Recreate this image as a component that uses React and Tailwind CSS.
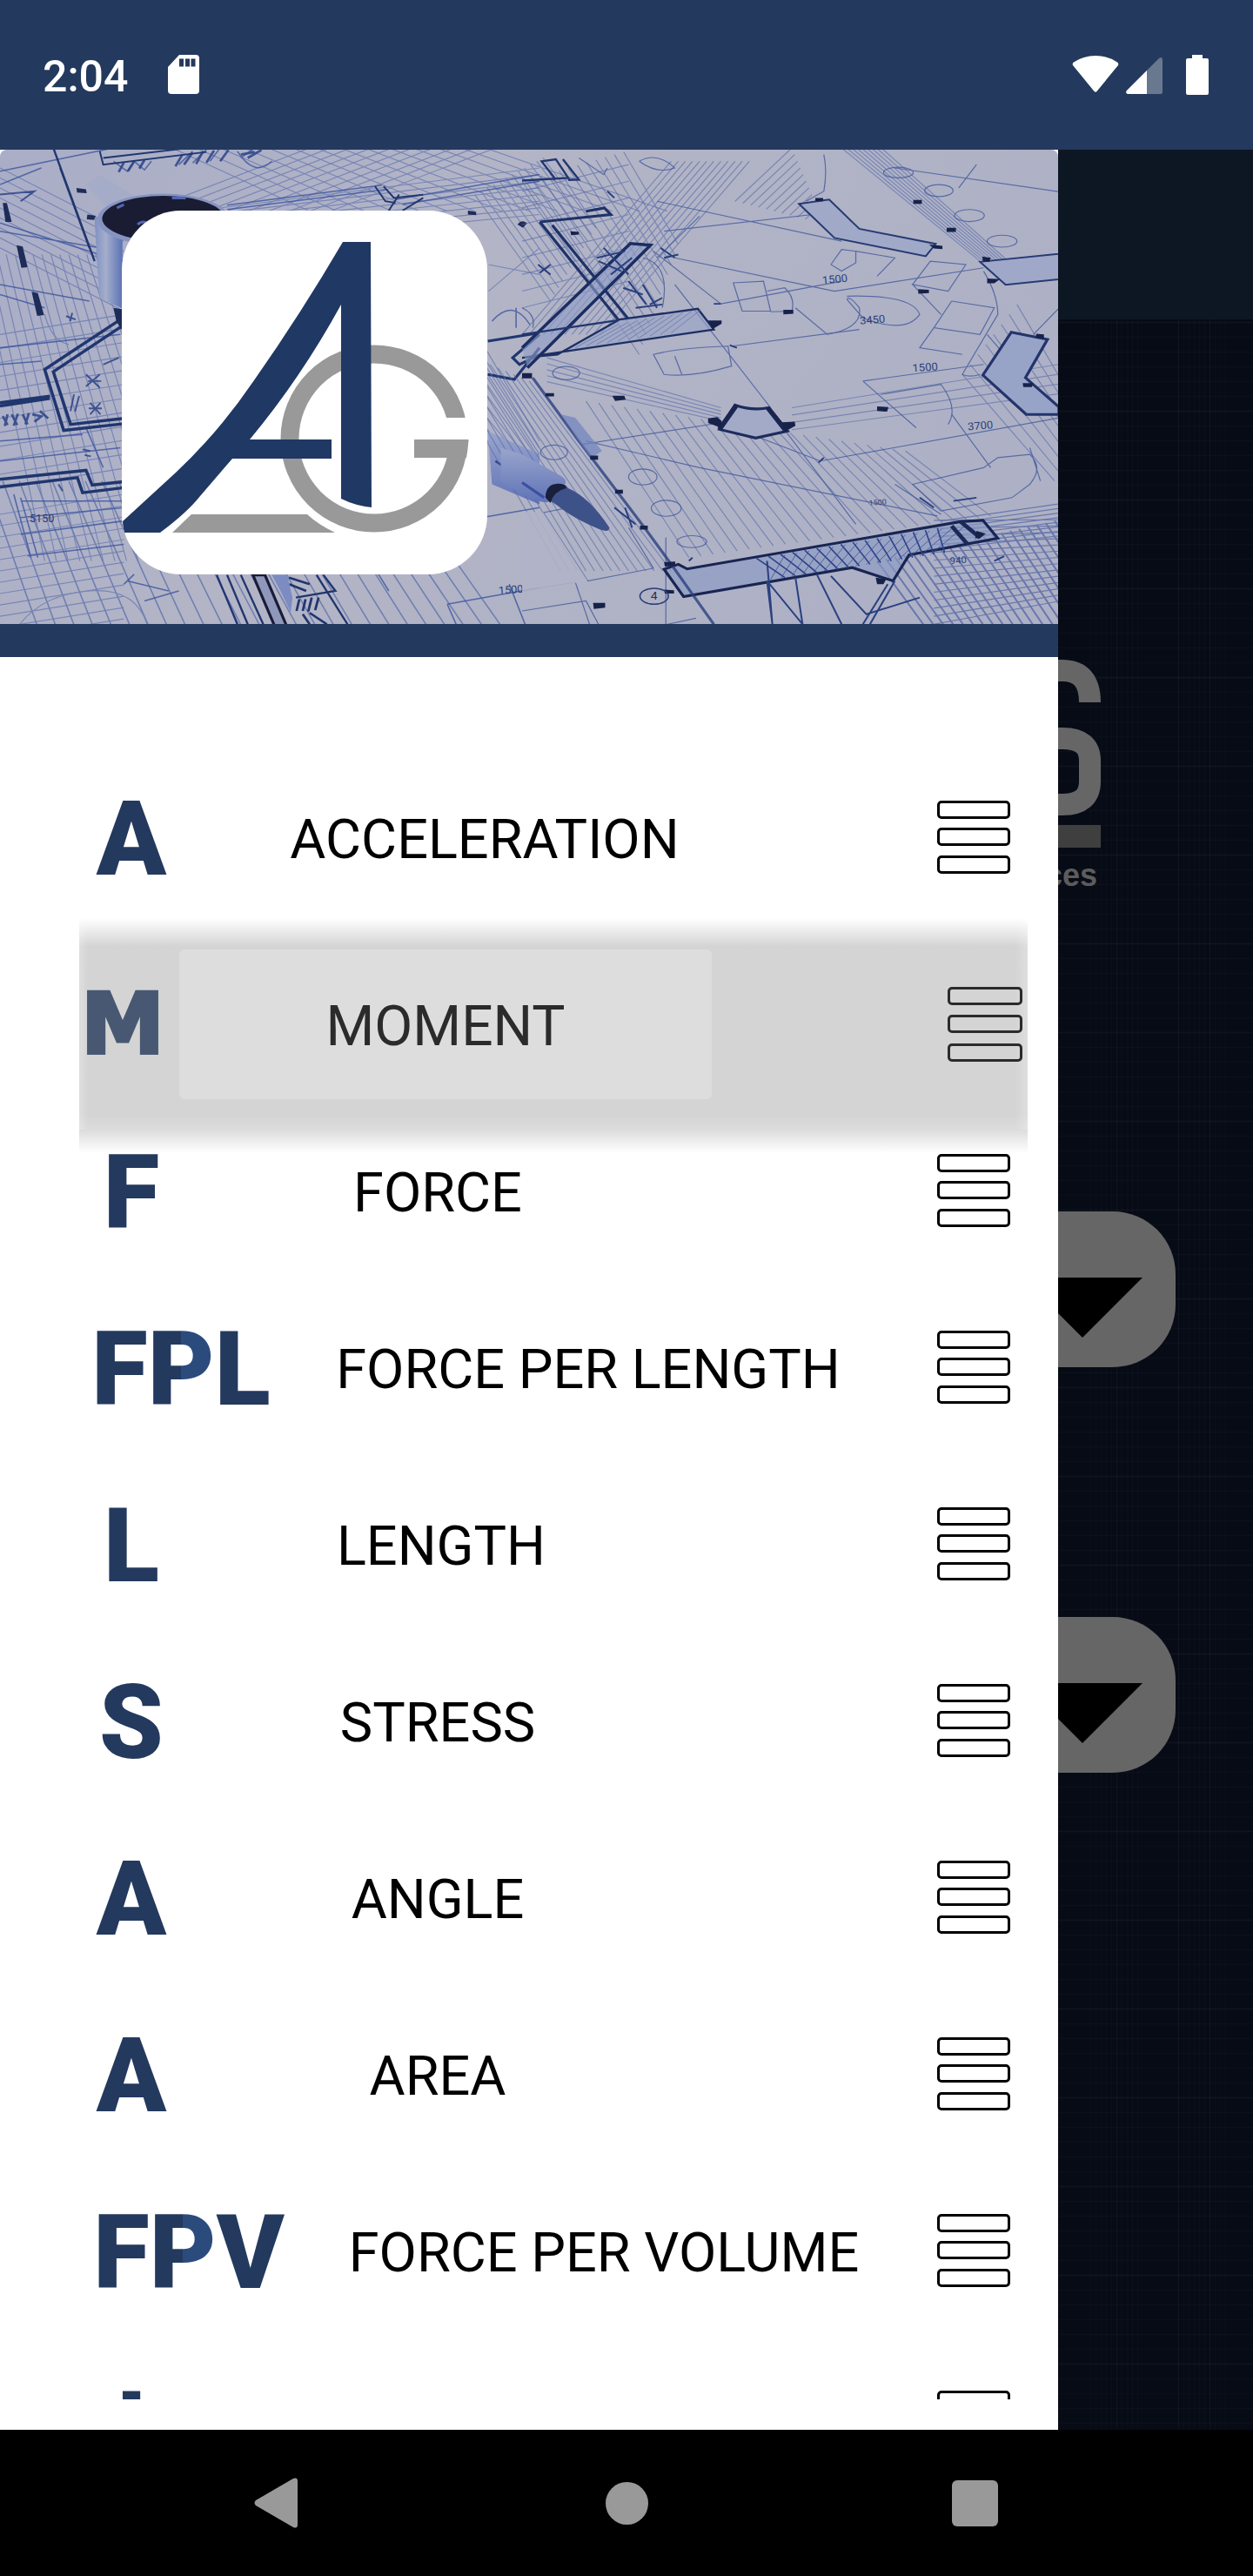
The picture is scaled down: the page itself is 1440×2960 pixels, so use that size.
import React from "react";

const NAVY = "#24395e";

const ITEMS = [
  { code: "A", label: "ACCELERATION", slot: "w-[120px]", button: "w-[692px]" },
  { code: "M", label: "MOMENT", slot: "w-[120px]", button: "w-[612px]", dragging: true },
  { code: "F", label: "FORCE", slot: "w-[120px]", button: "w-[584px]" },
  { code: "FPL", label: "FORCE PER LENGTH", slot: "w-[234px]", button: "w-[702px]" },
  { code: "L", label: "LENGTH", slot: "w-[120px]", button: "w-[592px]" },
  { code: "S", label: "STRESS", slot: "w-[120px]", button: "w-[584px]" },
  { code: "A", label: "ANGLE", slot: "w-[120px]", button: "w-[584px]" },
  { code: "A", label: "AREA", slot: "w-[120px]", button: "w-[584px]" },
  { code: "FPV", label: "FORCE PER VOLUME", slot: "w-[252px]", button: "w-[702px]" },
  { code: "I", label: "", slot: "w-[120px]", button: "w-[584px]" },
];

/* Path data for n segments, each shifted from the previous one. */
function family(n, x1, y1, x2, y2, dx1, dy1, dx2 = dx1, dy2 = dy1) {
  let d = "";
  for (let i = 0; i < n; i++) {
    d += `M${x1 + dx1 * i} ${y1 + dy1 * i}L${x2 + dx2 * i} ${y2 + dy2 * i}`;
  }
  return d;
}

function StatusBar() {
  return (
    <header className="flex h-[172px] items-center justify-between bg-[#24395e] pl-[49px] pr-[51px] text-white">
      <div className="flex items-center gap-[46px]">
        <span className="pt-1 text-[50px] leading-none font-medium">2:04</span>
        <svg className="h-[46px] w-[36px]" viewBox="0 0 36 46" aria-hidden="true">
          <path d="M13 0H32a4 4 0 0 1 4 4V41a4 4 0 0 1-4 4H4a4 4 0 0 1-4-4V14z" fill="#fff" />
          <path d="M13 4.500h5v9h-5zM20 4.500h5v9h-5zM26.500 4.500h5v9h-5z" fill={NAVY} />
        </svg>
      </div>
      <div className="flex items-center">
        <svg className="h-[46px] w-[54px]" viewBox="0 0 54 46" aria-hidden="true">
          <path d="M1 12Q0 10 2 8.500Q13 1 27 1T52 8.500Q54 10 53 12L28.500 42Q27 43.500 25.500 42z" fill="#fff" />
        </svg>
        <svg className="ml-2 h-[46px] w-[42px]" viewBox="0 0 42 46" aria-hidden="true">
          <path d="M1 41L38 4Q42 1.500 42 6V43q0 2-2 2H2q-3-1-1-4z" fill="#68788f" />
          <path d="M1 41L24 18V45H2q-3-1-1-4z" fill="#fff" />
        </svg>
        <svg className="ml-[27px] h-[46px] w-[26px]" viewBox="0 0 26 46" aria-hidden="true">
          <path d="M7 0H19V4H24q2 0 2 2V44q0 2-2 2H2q-2 0-2-2V6q0-2 2-2H7z" fill="#fff" />
        </svg>
      </div>
    </header>
  );
}

function Blueprint() {
  return (
    <svg
      className="absolute inset-0 h-full w-full"
      viewBox="0 0 1216 545"
      preserveAspectRatio="xMidYMid slice"
      fill="none"
      aria-hidden="true"
    >
      <defs>
        <linearGradient id="paper" x1="0" y1="0" x2="1" y2="0.3">
          <stop offset="0" stopColor="#a9adc6" />
          <stop offset="0.45" stopColor="#b3b5c6" />
          <stop offset="1" stopColor="#aeb1c5" />
        </linearGradient>
        <linearGradient id="mug" x1="0" y1="0" x2="1" y2="0">
          <stop offset="0" stopColor="#7f90c4" />
          <stop offset="0.4" stopColor="#a4aecb" />
          <stop offset="1" stopColor="#5b72b4" />
        </linearGradient>
        <linearGradient id="pen" x1="0" y1="0" x2="0" y2="1">
          <stop offset="0" stopColor="#9aa5cc" />
          <stop offset="1" stopColor="#5f74b8" />
        </linearGradient>
      </defs>
      <rect width="1216" height="545" fill="url(#paper)" />

      {/* left half of the sheet */}
      <g transform="translate(0 -2) scale(.3954 .3827)">
        <g stroke="#4b62a8" strokeWidth="3" opacity="0.55">
          <path d={family(16, -60, 320, 130, 1240, 26, 0, 34, 0)} />
          <path d={family(12, 0, 560, 360, 500, 0, 42)} />
          <path d={family(9, 0, 60, 360, 250, 0, 30)} />
          <path d={family(12, 0, 1100, 360, 1040, 0, 34)} />
          <path d={family(26, -40, 1000, 110, 1440, 48, 0, 54, 0)} stroke="#3a539f" strokeWidth="4" />
          <path d={family(8, 640, 180, 1568, 60, 0, 16, 0, 20)} />
          <path d={family(14, 500, 0, 900, 190, 70, 0, 80, 0)} />
          <path d={family(10, 900, 0, 420, 190, 60, 0)} />
          <path d={family(12, 1380, 140, 1600, 460, 18, -10, 12, -20)} />
          <path d={family(9, 1410, 600, 1568, 880, 0, 34, 0, 20)} />
          <path d="M50 1440Q120 1340 260 1330T430 1440M130 500Q150 580 200 590M1420 430L1568 300M1420 350L1568 380" />
        </g>
        <g stroke="#3c549f" strokeWidth="4" opacity="0.8">
          <path d="M0 70L330 0M0 110L120 60M0 225L290 320M0 250L290 300M0 410L260 460M0 440L130 480M40 1040L90 1230M60 1050L110 1230M60 1060H360M60 1110L360 1080M60 1160L360 1120M80 1225L360 1190" />
          <path d="M0 600L350 560M0 650L120 640M0 880L240 860M0 940L350 900M250 840L300 960M420 1360L520 1330M370 1300L490 1330M390 1280L360 1310M1400 1110L1568 1080M1300 1370L1568 1320M1300 1370L1330 1440M1480 1310L1530 1440M1100 1280L1130 1330" />
          <path d="M660 185L1120 125M660 172L1110 112M1150 155L1568 80M1170 170L1568 100M690 10Q740 90 790 40M740 0L700 30M560 10L520 50M600 5L560 45M640 0L610 40M330 40L370 70L390 40L420 66L440 40" />
          <path d="M1430 520Q1490 450 1540 530M1500 480V540" />
        </g>
        <g stroke="#2c4388" strokeWidth="7" opacity="0.85">
          <path d="M8 805L22 832M22 800L14 835M34 800L50 832M52 798L40 834M66 800L80 830M84 796L74 830M94 800L120 806L100 822M116 790L140 812M510 55L530 20M535 50L560 14M570 48L590 10M600 44L622 8M640 40L664 6M345 72L360 44M372 70L390 40M405 62L420 36M700 20L740 12M720 30L760 6" />
          <path d="M250 680L290 720M290 680L250 716M256 700H294M262 765L292 800M292 765L262 800M258 782H296M300 650L345 630M215 740L205 790M230 745L218 792M192 505L220 515M210 495L204 520M170 1010L182 1030M0 140L100 130L60 160M240 905L262 910M246 922L264 926" strokeWidth="5" />
        </g>
        <g stroke="#20366f" strokeWidth="9">
          <path d="M155 0L275 340M175 60L260 300" strokeWidth="6" />
          <path d="M350 515L130 665L185 848L360 828M350 538L155 672L205 830L360 812" />
          <path d="M0 1018L225 990L240 1035L360 1020M0 995L250 968L268 1012L360 1002M0 775L145 752M0 765L145 745" />
          <path d="M630 1282L690 1430M660 1282L720 1430M700 1282L765 1430M920 1282L1010 1430M940 1282L975 1330L860 1350" strokeWidth="6" />
          <path d="M1090 115L1120 160L1150 165M1115 115L1145 150L1230 140M1130 188L1160 140M1170 188L1230 150M290 10L300 50L600 12M300 30L550 0" strokeWidth="5" />
          <path d="M1418 580L1568 555M1418 680L1495 695L1568 600M1568 560L1490 630L1510 650L1568 620" strokeWidth="8" />
          <path d="M870 1355L862 1390M888 1355L880 1390M906 1350L896 1392M926 1350L916 1388M880 1400L900 1430M900 1396L950 1430M840 1290L900 1310M840 1310L890 1330" strokeWidth="7" />
        </g>
        <path d="M735 1282H770L835 1440H800z" fill="#8f98bb" stroke="#191c38" strokeWidth="8" />
        <path d="M790 1282L815 1330L845 1395L850 1350L835 1282z" fill="#7c8cc2" />
        <g fill="#1d2c58">
          <path d="M48 292L66 296L80 358L62 360zM92 432L110 436L128 502L108 504zM8 165L20 165L34 222L16 222zM222 120L250 124L252 136L224 134zM254 200L278 204L274 216L252 214zM1360 188L1384 192L1384 202L1360 200zM1504 230Q1516 212 1532 226L1520 240zM330 480L354 484V546L338 520z" />
        </g>
        <path d="M250 110L290 80L400 150L330 200z" fill="#a5acc8" />
        <path d="M275 210Q282 360 290 450L356 482V250L300 200z" fill="url(#mug)" />
        <ellipse cx="475" cy="215" rx="192" ry="78" fill="#8794c2" />
        <ellipse cx="475" cy="212" rx="178" ry="68" fill="#1a1c33" />
        <path d="M400 230Q420 210 440 240M340 180L360 170M500 150H540" stroke="#5267b4" strokeWidth="8" />
        <path d="M1418 850L1568 920V1070L1430 1010z" fill="url(#pen)" />
        <path d="M1440 940L1568 1030" stroke="#2f4588" strokeWidth="6" />
        <g fill="#2a3d74" fontFamily="Roboto, sans-serif" fontSize="32">
          <text x="1450" y="1340" transform="rotate(-4 1450 1340)">1500</text>
          <text x="86" y="1124">5150</text>
        </g>
      </g>

      {/* right half of the sheet */}
      <g transform="translate(600 -2) scale(.408 .3827)">
        <g stroke="#5569a8" strokeWidth="3" opacity="0.6">
          <path d={family(14, 20, 700, 420, 1270, -22, -10, -24, 0)} />
          <path d={family(26, 180, 760, 470, 1230, 36, 6, 34, -5)} />
          <path d={family(24, 1000, 1240, 1130, 1430, 25, -6, 28, 0)} stroke="#3a529c" strokeWidth="5" />
          <path d={family(14, 1160, 1430, 1568, 1350, 0, -24, 0, -18)} stroke="#3a529c" />
          <path d={family(12, 0, 100, 330, 620, 26, -8, 10, -30)} />
          <path d={family(12, 0, 560, 420, 40, 20, 0)} />
          <path d={family(10, 600, 160, 760, 0, 22, 6, 8, 20)} />
          <path d={family(9, 900, 0, 1290, 340, 14, 0, 12, 2)} />
          <path d={family(8, 1240, 680, 1500, 1000, 22, -30, 10, -30)} />
          <path d={family(8, 0, 480, 300, 400, 0, -50)} />
          <path d={family(5, 70, 630, 560, 780, 0, 18, 0, 10)} />
          <path d={family(4, 760, 780, 1568, 640, 0, 22, 0, 30)} />
          <path d={family(8, 1180, 1120, 1568, 1060, 0, 12, 0, 14)} stroke="#3a529c" />
        </g>
        <g stroke="#43599c" strokeWidth="3" opacity="0.8">
          <path d="M380 160L900 280M430 330L880 430L1300 360M400 250L900 190M500 205L380 330M1050 60L1568 140M1230 120L1280 50M370 310L560 468M430 410L700 780M590 595L950 545M560 468L900 400M170 890L560 825L840 940L1568 800M180 880L500 960L1170 1105M960 700L1300 650M960 700L1110 840M1010 740L1180 710Q1230 780 1200 830M700 790L940 1130" />
          <path d="M595 405L680 400L700 490L620 490zM690 430L740 420Q770 450 760 490L700 492M770 480L860 560Q960 540 950 480Q920 440 915 455M915 445Q1100 440 1120 500Q1080 560 960 510L915 455M870 350L900 305L940 310L940 345L900 370zM940 310L1050 330L1000 385M1100 410L1150 340L1250 350L1200 430L1100 410L1180 500M1210 460L1330 480L1290 560L1160 540L1210 460M1160 540L1120 600L1240 620" />
          <path d="M370 620Q440 600 580 595L590 655Q480 690 400 680zM430 625L450 680M0 480Q40 500 30 540M340 330Q420 350 395 480M850 20Q860 70 850 130L800 160M330 40Q380 10 430 60Q380 80 330 40M160 30L230 80L240 60" />
          <ellipse cx="90" cy="914" rx="38" ry="22" />
          <ellipse cx="340" cy="988" rx="40" ry="24" />
          <ellipse cx="406" cy="1082" rx="42" ry="24" />
          <ellipse cx="478" cy="1182" rx="42" ry="18" />
          <ellipse cx="1352" cy="280" rx="42" ry="18" />
          <ellipse cx="1260" cy="203" rx="42" ry="18" />
          <ellipse cx="1174" cy="128" rx="40" ry="18" />
          <ellipse cx="1060" cy="74" rx="42" ry="16" />
          <ellipse cx="124" cy="676" rx="38" ry="20" />
          <path d="M1100 1010L1300 960L1340 930L1430 920Q1470 960 1430 1010L1380 1050L1180 1090zM1210 800L1320 960M1430 900L1460 1000M1050 1010L1180 1100M1290 680Q1260 690 1240 680L1340 500Q1340 440 1300 370" />
          <path d="M0 1330L150 1304L190 1430M0 1390L180 1360L215 1430M60 1095L185 1300L370 1262L300 1140M60 1095L130 1080M405 1170V1430M410 1430L490 1412M1568 880L1310 560M1440 560L1568 420" />
        </g>
        <path d="M0 1090L60 1095L185 1300L0 1335z" fill="#b1b4c8" fillOpacity="0.85" />
        <path d="M780 168L865 155L950 243L1165 288L1137 325L880 270z" fill="#a1a9c8" stroke="#263a74" strokeWidth="5" />
        <path d="M1290 342L1568 312V388L1362 411z" fill="#9fa8c8" stroke="#263a74" strokeWidth="5" />
        <path d="M1378 553L1480 575L1418 690L1512 778V800H1420L1298 682z" fill="#98a3c8" stroke="#22346b" strokeWidth="8" />
        <path d="M100 620L275 515L495 483L540 545L0 630z" fill="#98a2c6" fillOpacity="0.6" stroke="#1d2f63" strokeWidth="6" />
        <path d={family(10, 150, 600, 270, 530, 30, -5, 26, -5)} stroke="#6678ad" strokeWidth="2" />
        <path d="M50 222L272 517M85 232L298 512M50 222L250 200L232 180L180 190" stroke="#1f3267" strokeWidth="8" />
        <path d="M0 600L305 287L362 292L15 660" fill="#8f9cc6" fillOpacity="0.6" stroke="#1c2d62" strokeWidth="9" />
        <path d="M0 560L272 517M0 98L130 90L95 34L55 40L95 95M115 34L160 95L130 96" stroke="#22376f" strokeWidth="6" />
        <path d="M600 772Q650 790 694 780L748 850L658 871L556 845z" fill="#a2aac8" stroke="#1d2c5c" strokeWidth="8" />
        <path d="M556 845L604 772M692 780L744 850" stroke="#1a2550" strokeWidth="14" />
        <path d="M400 1265L455 1347L930 1260L1045 1300L1090 1222L1340 1172L1298 1118L1235 1122L465 1264L440 1250z" fill="#8c99c3" fillOpacity="0.65" stroke="#182552" strokeWidth="8" />
        <path d={family(16, 660, 1232, 740, 1290, 34, -6, 30, -5)} stroke="#2b4288" strokeWidth="4" />
        <path d={family(16, 740, 1222, 700, 1296, 34, -6, 30, -5)} stroke="#3b5194" strokeWidth="2" />
        <path d="M690 1300L705 1430M690 1240L705 1430M690 1300L790 1430M790 1430L770 1290M830 1280L900 1430M1030 1310L960 1430M1050 1300L980 1430M870 1285L970 1400L1120 1350" stroke="#2a4080" strokeWidth="5" />
        <path d="M1210 1135L1255 1190M1235 1122L1290 1170" stroke="#1b2957" strokeWidth="12" />
        <path d="M30 690L160 880L345 1140L420 1250L540 1430" stroke="#2a4080" strokeWidth="8" opacity="0.8" />
        <path d="M110 800L160 880L195 930L225 910L150 810z" fill="#6f83bd" fillOpacity="0.7" />
        <g fill="#17224a">
          <path d="M524 812L550 808L562 820L560 840L524 826zM732 824L768 822L770 834L740 852zM254 744L288 744L292 756L262 760zM524 518L562 518L562 528L536 544zM736 486L764 486V498L736 500zM1116 424L1146 426V436L1116 438zM1000 776L1032 778L1028 792L1000 790zM1410 706H1440L1436 718H1412zM1296 326L1320 330L1316 342L1298 340zM1310 392L1346 394L1330 406H1310zM1448 558L1470 560V572L1448 570zM1102 156H1126V168H1102zM1196 240H1222V252H1196zM200 1366L234 1366V1380L202 1384zM400 1244L432 1242L430 1256H402zM400 1326L428 1328V1338H402zM996 1290L1026 1294L1018 1310H1000zM262 1026H284V1038H262zM192 924H214V936H192zM332 1134H354V1146H332zM66 736H90V746H66zM136 250L160 252V260L138 262zM0 676H28V692H0zM1146 290L1184 294V304L1160 302zM826 150H848V160H826zM1280 1150L1306 1158L1290 1172H1276z" />
        </g>
        <g stroke="#2a3f7d" strokeWidth="5">
          <path d="M210 330L290 310M230 300L300 380M250 380L310 330M215 340L280 370M285 420L340 440M300 400L350 470M320 480L395 470M340 410L380 480M360 470L395 450M1120 1050L1160 1080M1215 1060L1280 1050M390 300L430 330M400 330L440 320M240 130L260 150M45 350L80 380M50 375L80 350M260 1080L320 1130M290 1080L310 1140M540 468H560M835 945L850 930M585 592L605 600M470 1240L480 1230M1330 1240L1358 1226" />
        </g>
        <g fill="#2c3f78" fontFamily="Roboto, sans-serif" fontSize="32">
          <text x="846" y="408" transform="rotate(-5 846 408)">1500</text>
          <text x="952" y="530" transform="rotate(-5 952 530)">3450</text>
          <text x="1100" y="672" transform="rotate(-4 1100 672)">1500</text>
          <text x="1256" y="848" transform="rotate(-5 1256 848)">3700</text>
          <text x="978" y="1074" fontSize="22" transform="rotate(-5 978 1074)">1500</text>
          <text x="1206" y="1250" fontSize="28" transform="rotate(-5 1206 1250)">940</text>
        </g>
        <ellipse cx="372" cy="1346" rx="40" ry="24" stroke="#2c3f78" strokeWidth="4" />
        <text x="362" y="1357" fill="#1f2f62" fontFamily="Roboto, sans-serif" fontSize="34">4</text>
        <path d="M-60 900L0 920L110 985Q130 1000 120 1010L75 1062Q60 1070 0 1040L-60 1000z" fill="url(#pen)" />
        <path d="M0 1005L62 1050" stroke="#3a50a0" strokeWidth="8" />
        <path d="M66 1050Q66 1010 122 1012L130 1022Q190 1050 246 1140Q246 1156 220 1146Q140 1110 100 1074z" fill="#3d5289" />
        <path d="M66 1050Q66 1010 100 1008Q125 1008 124 1022Q90 1030 80 1066z" fill="#191f3c" />
      </g>
    </svg>
  );
}

function AppLogo() {
  return (
    <svg className="h-full w-full" viewBox="0 0 420 418" role="img" aria-label="AG logo">
      <circle cx="290" cy="262" r="97" fill="none" stroke="#999" strokeWidth="21" />
      <path d="M366 238H420V274H366z" fill="#fff" />
      <path d="M336 263H398.500Q398 273 396 284H336z" fill="#999" />
      <path d="M80 349H213Q226 361 245 370H58z" fill="#999" />
      <path
        d="M254 36H286L287 341Q268 339 252 331V108Q206 192 147 263H241V285H127L90 328Q75 347 44 370H3Q1 364 1 357L62 301Q112 254 152 195Q206 118 254 36z"
        fill="#203864"
      />
    </svg>
  );
}

function DragHandle({ dragging }) {
  return (
    <button
      type="button"
      aria-label="Reorder"
      className={
        dragging
          ? "ml-auto flex h-[86px] w-[86px] flex-col justify-between"
          : "ml-auto flex h-[84px] w-[84px] flex-col justify-between"
      }
    >
      {[0, 1, 2].map((bar) => (
        <span
          key={bar}
          className={
            dragging
              ? "h-[21px] w-full rounded-[5px] border-3 border-[#2b2b2b]"
              : "h-[21px] w-full rounded-[5px] border-3 border-black"
          }
        />
      ))}
    </button>
  );
}

function Code({ text }) {
  return [...text].map((ch, i) =>
    ch === "P" ? (
      <span
        key={i}
        className="bg-[linear-gradient(90deg,#24395e_50%,#2b4b7d_50%)] bg-clip-text text-transparent"
      >
        P
      </span>
    ) : (
      <span key={i}>{ch}</span>
    )
  );
}

function Item({ item }) {
  if (item.dragging) {
    return (
      <li className="relative z-10 h-[203px] shrink-0">
        <div className="absolute -top-[8px] right-[35px] left-[91px] h-[270px] bg-[linear-gradient(180deg,#d4d4d400_0%,#d4d4d4_12%,#d4d4d4_84%,#dcdcdc_90%,#dcdcdc00_100%)]">
          <div className="flex h-[243px] items-center bg-[linear-gradient(90deg,#ffffff40,#ffffff00_10px,#ffffff00_calc(100%_-_14px),#ffffff40)] pr-[6px]">
            <span className="w-[100px] text-center font-['DejaVu_Sans'] text-[96px] leading-none font-bold text-[#485872] [-webkit-text-stroke:4px_#485872]">
              {item.code}
            </span>
            <button
              type="button"
              className="ml-[15px] h-[172px] w-[612px] rounded-md bg-[#ddd] pt-[6px] text-[64px] leading-none text-[#2b2b2b]"
            >
              {item.label}
            </button>
            <DragHandle dragging />
          </div>
        </div>
      </li>
    );
  }
  return (
    <li className="flex h-[203px] shrink-0 items-center pr-[55px] pl-[91px]">
      <span
        className={`${item.slot} shrink-0 pt-[6px] text-center text-[118px] leading-none font-black whitespace-nowrap text-[#24395e]`}
      >
        <Code text={item.code} />
      </span>
      {item.label && (
        <button
          type="button"
          className={`${item.button} h-[168px] shrink-0 pt-[6px] text-[63px] leading-none whitespace-nowrap text-black`}
        >
          {item.label}
        </button>
      )}
      <DragHandle />
    </li>
  );
}

function Drawer() {
  return (
    <nav
      aria-label="Quantities"
      className="z-10 col-start-1 row-start-1 flex h-[2620px] w-[calc(100%-224px)] flex-col bg-white"
    >
      <div className="relative h-[545px] shrink-0 overflow-hidden rounded-t-lg">
        <Blueprint />
        <div className="relative mt-[70px] ml-[140px] h-[418px] w-[420px] overflow-hidden rounded-[68px] bg-white">
          <AppLogo />
        </div>
      </div>
      <div className="h-[38px] shrink-0 bg-[#24395e]" />
      <ul className="mb-[35px] flex min-h-0 flex-1 flex-col overflow-hidden pt-[105px]">
        {ITEMS.map((item, i) => (
          <Item key={i} item={item} />
        ))}
      </ul>
    </nav>
  );
}

function Dropdown({ label }) {
  return (
    <button
      type="button"
      aria-label={label}
      className="flex h-[179px] w-full items-end justify-end rounded-[72px] bg-[#666] pr-[38px] pb-[34px]"
    >
      <svg className="h-[69px] w-[138px]" viewBox="0 0 138 69" aria-hidden="true">
        <path d="M0 0H138L69 69z" fill="#000" />
      </svg>
    </button>
  );
}

function Grid() {
  const rows = [];
  for (let y = 3; y < 2460; y += 17) rows.push(y);
  const columns = [37, 43, 49, 55, 61, 67, 73, 79, 85, 91, 138, 144, 150, 156, 162, 168, 174, 180, 186, 192];
  return (
    <svg className="absolute top-0 right-0 h-full w-[224px]" aria-hidden="true">
      {rows.map((y, i) => (
        <path key={y} d={`M0 ${y}.5H224`} stroke="#fff" strokeWidth="2" strokeOpacity={i % 6 === 0 ? 0.035 : 0.018} />
      ))}
      {columns.map((x) => (
        <path key={x} d={`M${x}.5 0V2620`} stroke="#fff" strokeOpacity={x === 67 || x === 138 || x === 174 ? 0.04 : 0.018} />
      ))}
    </svg>
  );
}

function Backdrop() {
  return (
    <main className="col-start-1 row-start-1 flex flex-col">
      <div className="h-[195px] bg-[#0d1724]" />
      <div className="relative flex-1 overflow-hidden bg-[#070b16]">
        <Grid />
        <div className="relative flex flex-col items-end pr-[89px]">
          <div className="mt-[391px] mr-[86px] flex flex-col items-end">
            <svg className="h-[216px] w-[120px]" viewBox="0 0 120 216" aria-hidden="true">
              <g fill="none" stroke="#666" strokeWidth="25">
                <path d="M0 12.500H76Q107.500 12.500 107.500 49" />
                <path d="M0 90.500H76Q107.500 90.500 107.500 116V140Q107.500 166.500 76 166.500H0" />
              </g>
              <path d="M0 190H120V216H0z" fill="#3f3f3f" />
            </svg>
            <span className="mt-[9px] pr-1 font-['Liberation_Sans'] text-[36px] leading-[46px] font-bold text-[#5c5c5c]">
              forces
            </span>
          </div>
          <div className="mt-[363px] flex w-full flex-col gap-[287px] pl-[89px]">
            <Dropdown label="Convert from" />
            <Dropdown label="Convert to" />
          </div>
        </div>
      </div>
    </main>
  );
}

function NavigationBar() {
  return (
    <footer className="flex h-[168px] items-center justify-center bg-black">
      <button type="button" aria-label="Back" className="flex h-full w-[400px] items-center justify-center">
        <svg className="h-[58px] w-[58px]" viewBox="0 0 58 58" fill="#999" aria-hidden="true">
          <path d="M46 1Q51 -1 51 4V54Q51 59 46 57L3 32Q0 29 3 26z" />
        </svg>
      </button>
      <button type="button" aria-label="Home" className="flex h-full w-[400px] items-center justify-center">
        <span className="h-[49px] w-[49px] rounded-full bg-[#999]" />
      </button>
      <button type="button" aria-label="Overview" className="flex h-full w-[400px] items-center justify-center">
        <span className="h-[53px] w-[53px] rounded-md bg-[#999]" />
      </button>
    </footer>
  );
}

export default function App() {
  return (
    <div className="flex min-h-screen flex-col bg-black font-[Roboto,sans-serif]">
      <StatusBar />
      <div className="grid flex-1 grid-cols-1">
        <Backdrop />
        <Drawer />
      </div>
      <NavigationBar />
    </div>
  );
}
